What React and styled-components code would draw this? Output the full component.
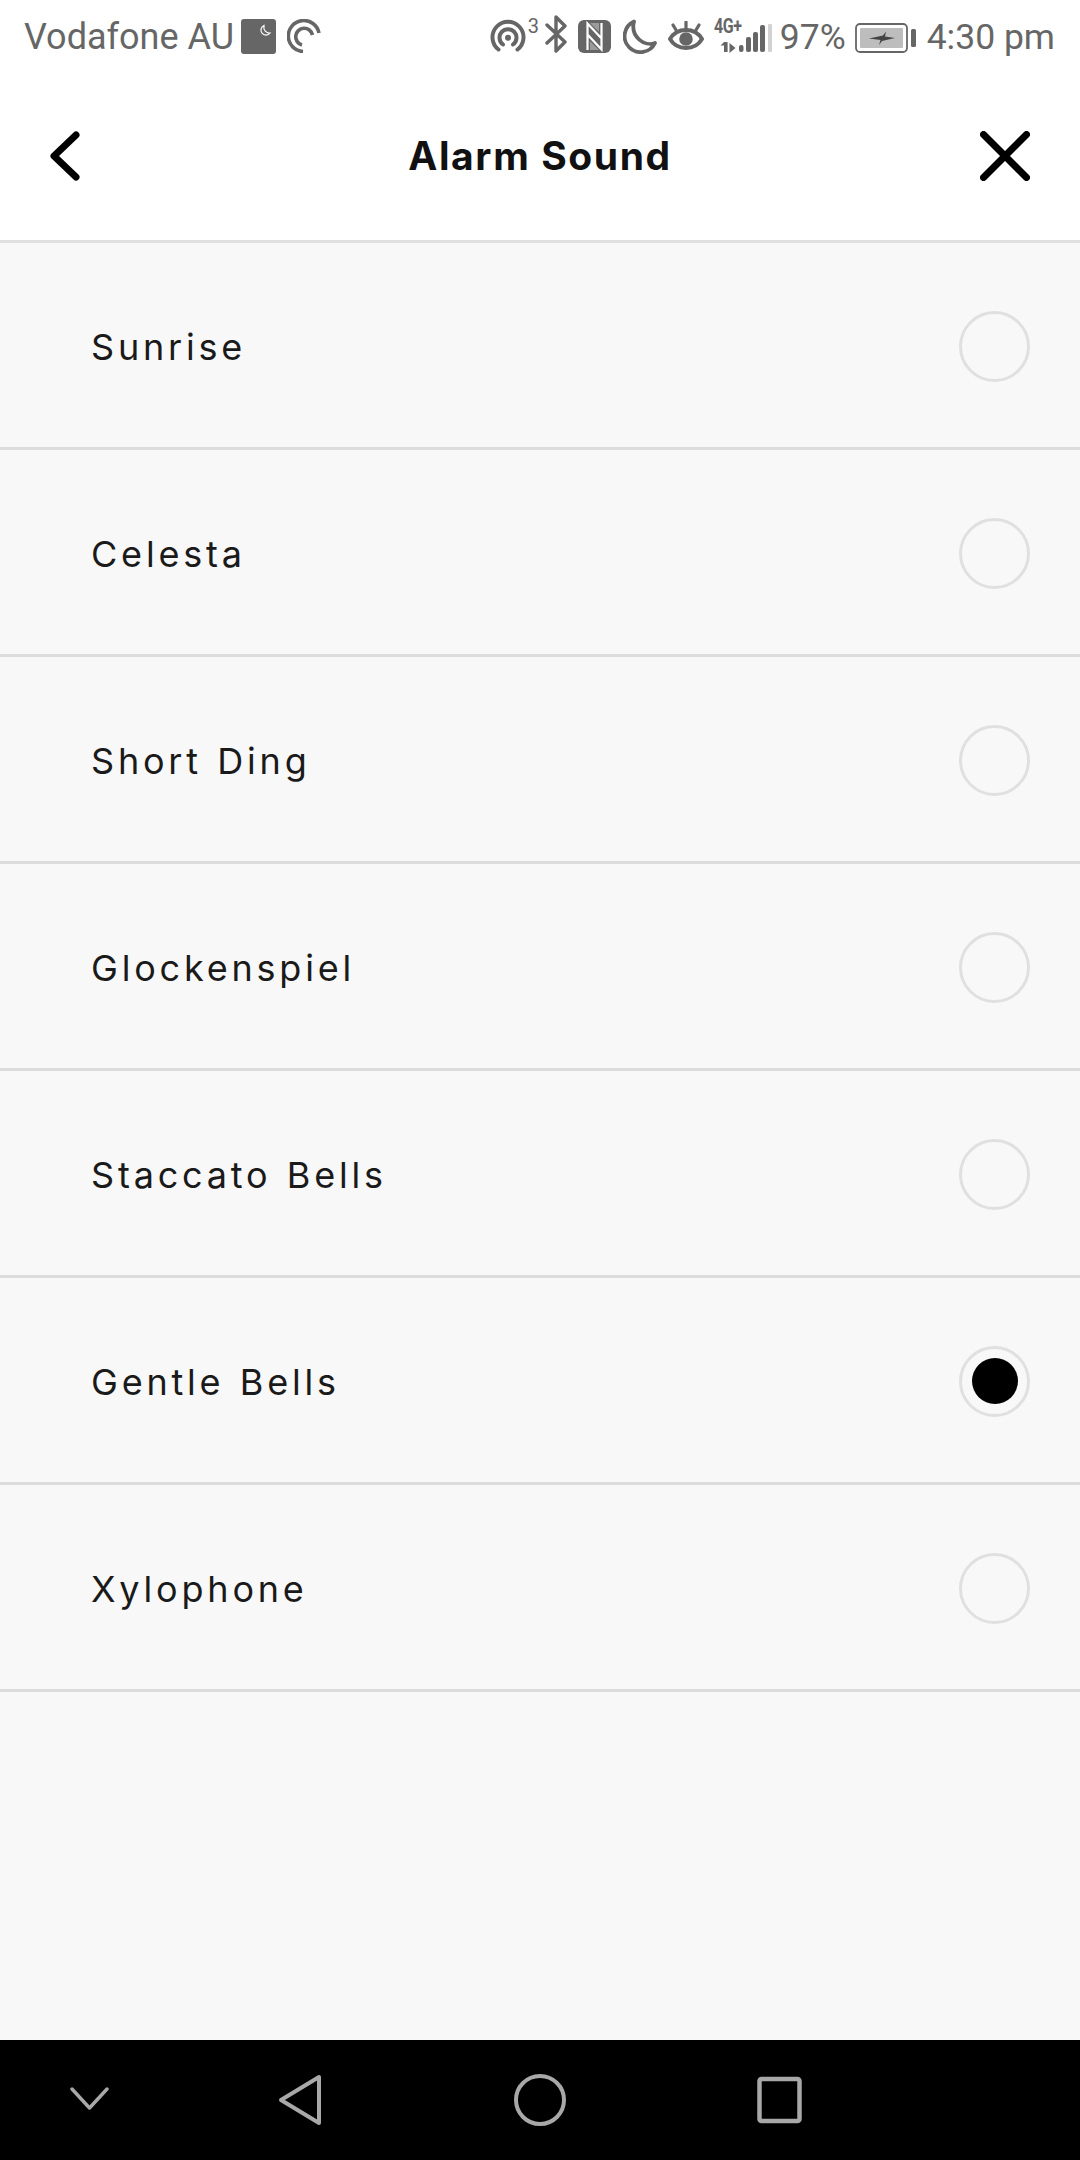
import React from "react";
import styled, { createGlobalStyle } from "styled-components";

const Global = createGlobalStyle`
  html, body { margin: 0; padding: 0; background: #f8f8f8; }
  * { box-sizing: border-box; }
`;

const Page = styled.div`
  width: 1080px;
  height: 2160px;
  display: flex;
  flex-direction: column;
  background: #f8f8f8;
  overflow: hidden;
`;

const StatusBar = styled.div`
  height: 72px;
  flex: none;
  background: #fff;
  display: flex;
  align-items: flex-start;
  justify-content: space-between;
  padding: 0 25px 0 24px;
  color: #666;
  font-family: Roboto, "Liberation Sans", sans-serif;
  line-height: 74px;
`;

const StatusGroup = styled.div`
  display: flex;
  align-items: flex-start;
  height: 72px;
  font-size: ${(p) => p.$size}px;
`;

const StatusText = styled.span`
  margin-left: ${(p) => p.$ml || 0}px;
  white-space: nowrap;
`;

const Superscript = styled.span`
  width: 11px;
  margin-left: 2px;
  margin-top: 16px;
  flex: none;
  font-size: 20px;
  line-height: 20px;
`;

const Ico = styled.svg`
  flex: none;
  display: block;
  margin-left: ${(p) => p.$ml || 0}px;
  margin-top: ${(p) => p.$mt || 0}px;
`;

const Header = styled.header`
  height: 171px;
  flex: none;
  background: #fff;
  border-bottom: 3px solid #e0e0e0;
  display: flex;
  align-items: center;
  justify-content: space-between;
  padding: 0 50px;
  position: relative;
`;

const Title = styled.h1`
  position: absolute;
  left: 0;
  right: 0;
  top: 59px;
  margin: 0;
  text-align: center;
  font-family: Inter, "Liberation Sans", sans-serif;
  font-weight: 700;
  font-size: 39px;
  letter-spacing: 1.6px;
  line-height: 50px;
  color: #111;
`;

const List = styled.ul`
  list-style: none;
  margin: 0;
  padding: 0;
  flex: 1;
`;

const Row = styled.li`
  height: 207px;
  display: flex;
  align-items: center;
  justify-content: space-between;
  padding: 2px 50px 0 91px;
  border-bottom: 3px solid #dcdcdc;
`;

const Label = styled.span`
  font-family: Inter, "Liberation Sans", sans-serif;
  font-weight: 400;
  font-size: 36px;
  letter-spacing: 3.8px;
  word-spacing: 1.5px;
  padding-top: 2px;
  color: #1a1a1a;
`;

const Radio = styled.span`
  width: 71px;
  height: 71px;
  border-radius: 50%;
  border: 3px solid #e0e0e0;
  display: flex;
  align-items: center;
  justify-content: center;
`;

const Dot = styled.span`
  width: 46px;
  height: 46px;
  border-radius: 50%;
  background: #000;
`;

const NavBar = styled.nav`
  height: 120px;
  flex: none;
  background: #000;
  display: flex;
  align-items: flex-start;
`;

const GREY = "#666";

const Hotspot = () => (
  <Ico width="36" height="34" viewBox="0 0 36 34" $mt={18} fill="none" stroke={GREY} strokeWidth="4" strokeLinecap="round">
    <path d="M8.5 31.5A15.5 15.5 0 1 1 27.5 31.5" />
    <path d="M13 26.5A8.5 8.5 0 1 1 23 26.5" />
    <circle cx="18" cy="19.7" r="3" fill={GREY} stroke="none" />
  </Ico>
);

const Bluetooth = () => (
  <Ico width="22" height="40" viewBox="0 0 22 40" $ml={6} $mt={14} fill="none" stroke={GREY} strokeWidth="3.4" strokeLinecap="round" strokeLinejoin="round">
    <path d="M2 11L20 28L11 37V3L20 12L2 29" />
  </Ico>
);

const Nfc = () => (
  <Ico width="33" height="33" viewBox="0 0 33 33" $ml={11} $mt={20}>
    <rect width="33" height="33" rx="6" fill={GREY} />
    <path d="M9.5 30V3.5L24 19M23.5 3V29.5L9 14" fill="none" stroke="#fff" strokeWidth="2.2" />
    <path d="M12 3h9v9zM21 30h-9v-9z" fill="#fff" opacity=".35" />
  </Ico>
);

const Moon = () => (
  <Ico width="34" height="35" viewBox="0 0 34 35" $ml={12} $mt={19} fill="none" stroke={GREY} strokeWidth="3.8" strokeLinejoin="round">
    <path d="M11 2.5A16 16 0 1 0 32 24C22 28 7 18 11 2.5Z" />
  </Ico>
);

const Eye = () => (
  <Ico width="36" height="30" viewBox="0 0 36 30" $ml={11} $mt={21}>
    <path d="M2 18C9 6 27 6 34 18C27 30 9 30 2 18Z" fill="none" stroke={GREY} strokeWidth="4" strokeLinejoin="round" />
    <circle cx="18" cy="18" r="6.8" fill={GREY} />
    <path d="M18 1v6M5 4l3 5M31 4l-3 5" stroke={GREY} strokeWidth="3.2" strokeLinecap="round" />
  </Ico>
);

const SignalWrap = styled.span`
  position: relative;
  width: 58px;
  height: 72px;
  margin-left: 10px;
  flex: none;
  display: block;
`;

const NetType = styled.span`
  position: absolute;
  left: 0;
  top: 16px;
  font-family: Roboto, sans-serif;
  font-weight: 700;
  font-size: 20px;
  line-height: 20px;
  letter-spacing: -0.5px;
  transform: scaleX(0.8);
  transform-origin: left center;
  color: ${GREY};
`;

const SignalBars = styled.svg`
  position: absolute;
  left: 5px;
  top: 24px;
`;

const Signal = () => (
  <SignalWrap>
    <NetType>4G+</NetType>
    <SignalBars width="54" height="29" viewBox="0 0 54 29">
      <path d="M5 18h3.6v10H5zM1.5 21.5l3.5-3.5v3.5z M10.5 19l6 5-6 5z" fill={GREY} />
      <rect x="20" y="21" width="4.5" height="7" rx="2" fill={GREY} />
      <rect x="27" y="13" width="5" height="15" rx="2" fill={GREY} />
      <rect x="34" y="8" width="5" height="20" rx="2" fill={GREY} />
      <rect x="41" y="1" width="5" height="27" rx="2" fill={GREY} />
      <rect x="49" y="0" width="4" height="28" rx="1" fill="#d2d2d2" />
    </SignalBars>
  </SignalWrap>
);

const Battery = () => (
  <Ico width="62" height="30" viewBox="0 0 62 30" $ml={9} $mt={23}>
    <rect x="1" y="1" width="51" height="28" rx="4" fill="#fff" stroke={GREY} strokeWidth="1.8" />
    <rect x="5" y="5" width="43" height="20" rx="1" fill="#bdbdbd" />
    <path d="M14 15.5L28 12.5L31 8.5L30 13.5L40 15L27 18L24 22L25.5 17Z" fill="#444" />
    <rect x="56" y="6" width="5" height="18" rx="1.5" fill={GREY} />
  </Ico>
);

const QuietTile = () => (
  <Ico width="35" height="35" viewBox="0 0 35 35" $ml={7} $mt={19}>
    <rect width="35" height="35" rx="3" fill={GREY} />
    <path d="M23 6.5A5 5 0 1 0 29 14C25.5 14.5 22 11 23 6.5Z" fill="none" stroke="#fff" strokeWidth="1.2" />
  </Ico>
);

const CastRing = () => (
  <Ico width="34" height="34" viewBox="0 0 34 34" $ml={11} $mt={19} fill="none" stroke={GREY} strokeWidth="3.6">
    <path d="M32 14A15.5 15.5 0 1 0 16 32.5" />
    <path d="M25.5 16A8.5 8.5 0 1 0 15 26" />
  </Ico>
);

const BackIcon = () => (
  <Ico width="30" height="50" viewBox="0 0 30 50" fill="none" stroke="#000" strokeWidth="7" strokeLinecap="round" strokeLinejoin="round">
    <path d="M26 4L4 25L26 46" />
  </Ico>
);

const CloseIcon = () => (
  <Ico width="50" height="50" viewBox="0 0 50 50" fill="none" stroke="#000" strokeWidth="7" strokeLinecap="round">
    <path d="M3.5 3.5L46.5 46.5M46.5 3.5L3.5 46.5" />
  </Ico>
);

const NAV = "#a8a8a8";

const sounds = ["Sunrise", "Celesta", "Short Ding", "Glockenspiel", "Staccato Bells", "Gentle Bells", "Xylophone"];

export default function App() {
  return (
    <Page>
      <Global />
      <StatusBar>
        <StatusGroup $size={36}>
          <StatusText>Vodafone AU</StatusText>
          <QuietTile />
          <CastRing />
        </StatusGroup>
        <StatusGroup $size={35.5}>
          <Hotspot />
          <Superscript>3</Superscript>
          <Bluetooth />
          <Nfc />
          <Moon />
          <Eye />
          <Signal />
          <StatusText $ml={8}>97%</StatusText>
          <Battery />
          <StatusText $ml={10}>4:30 pm</StatusText>
        </StatusGroup>
      </StatusBar>
      <Header>
        <BackIcon />
        <Title>Alarm Sound</Title>
        <CloseIcon />
      </Header>
      <List>
        {sounds.map((s) => (
          <Row key={s}>
            <Label>{s}</Label>
            <Radio>{s === "Gentle Bells" && <Dot />}</Radio>
          </Row>
        ))}
      </List>
      <NavBar>
        <Ico width="40" height="24" viewBox="0 0 40 24" $ml={70} $mt={47} fill="none" stroke={NAV} strokeWidth="3.4" strokeLinecap="round" strokeLinejoin="round">
          <path d="M2 2L19.5 21L37 2" />
        </Ico>
        <Ico width="44" height="52" viewBox="0 0 44 52" $ml={168} $mt={34} fill="none" stroke={NAV} strokeWidth="4" strokeLinejoin="round">
          <path d="M41 3V49L3 26Z" />
        </Ico>
        <Ico width="52" height="52" viewBox="0 0 52 52" $ml={192} $mt={34} fill="none" stroke={NAV} strokeWidth="4">
          <circle cx="26" cy="26" r="24" />
        </Ico>
        <Ico width="46" height="48" viewBox="0 0 46 48" $ml={191} $mt={36} fill="none" stroke={NAV} strokeWidth="4.5" strokeLinejoin="round">
          <rect x="2.5" y="3" width="40" height="42" rx="2" />
        </Ico>
      </NavBar>
    </Page>
  );
}
